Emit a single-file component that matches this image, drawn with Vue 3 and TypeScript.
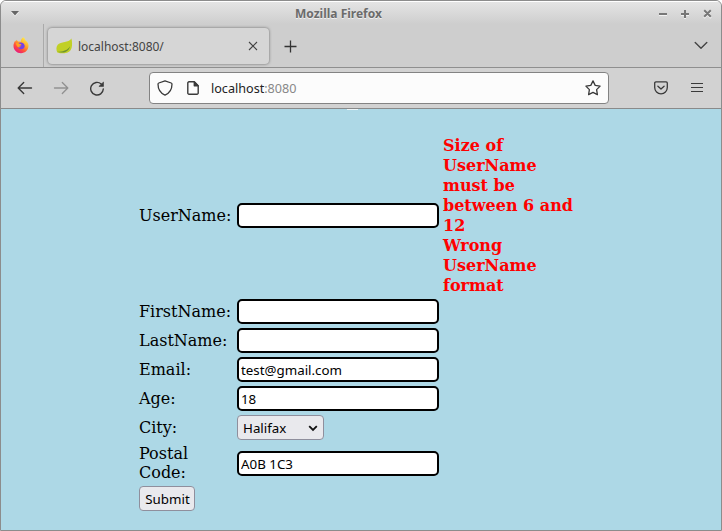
<script setup lang="ts">
import { ref } from 'vue'

interface Field {
  id: string
  label: string
  value: string
  kind: 'text' | 'select'
  errors?: string[]
}

const fields = ref<Field[]>([
  {
    id: 'userName',
    label: 'UserName:',
    value: '',
    kind: 'text',
    errors: ['Size of UserName must be between 6 and 12', 'Wrong UserName format'],
  },
  { id: 'firstName', label: 'FirstName:', value: '', kind: 'text' },
  { id: 'lastName', label: 'LastName:', value: '', kind: 'text' },
  { id: 'email', label: 'Email:', value: 'test@gmail.com', kind: 'text' },
  { id: 'age', label: 'Age:', value: '18', kind: 'text' },
  { id: 'city', label: 'City:', value: 'Halifax', kind: 'select' },
  { id: 'postalCode', label: 'Postal Code:', value: 'A0B 1C3', kind: 'text' },
])
</script>

<template>
  <div class="window">
    <header class="titlebar">
      <svg class="win-menu" width="10" height="7" viewBox="0 0 10 7">
        <path d="M1 2h8L5 6.5z" fill="#f5f5f5" />
        <path d="M1 1h8L5 5.5z" fill="#666" />
      </svg>
      <span class="win-title">Mozilla Firefox</span>
      <svg class="win-controls" width="54" height="11" viewBox="0 0 54 11" fill="none" stroke-width="2">
        <g stroke="#f2f2f2">
          <path d="M1 7h8M23 7h8M27 3v8M46 3l7 7M53 3l-7 7" />
        </g>
        <g stroke="#777">
          <path d="M1 6h8M23 6h8M27 2v8M46.2 2.2l6.6 6.6M52.8 2.2l-6.6 6.6" />
        </g>
      </svg>
    </header>

    <nav class="tabs">
      <div class="pinned">
        <svg width="16" height="17" viewBox="0 0 16 17">
          <defs>
            <linearGradient id="flame" x1="0.85" y1="0.05" x2="0.25" y2="1">
              <stop offset="0" stop-color="#fff44f" />
              <stop offset="0.4" stop-color="#ffa52a" />
              <stop offset="0.7" stop-color="#ff4a3d" />
              <stop offset="1" stop-color="#e31587" />
            </linearGradient>
          </defs>
          <path
            d="M10.2.3c1 .8 1.800 1.700 2.100 3 1.800 1.200 3.200 3.200 3.200 5.500 0 4.200-3.300 7.400-7.500 7.400S.5 13 .5 9c0-2 .6-3.900 1.900-5.600l.4 1.400.8-2L5 4.600c1-.2 1.800 0 2.500.3C7.700 3 8.700 1.300 10.200.3z"
            fill="url(#flame)"
          />
          <path d="M5.200 6.300c1-.8 2.500-1.200 4-.6 1.600.6 2.600 2 2.500 3.500-.2 1.800-1.700 3-3.500 3-1.700 0-3.100-1-3.400-2.500 1 .6 2 .4 2.800-.1l1-.8-1.700-.4z" fill="#7542e5" />
          <path d="M3 6.200c1.300-.5 2.600-.2 3.500.6l1.900.4c-.2 1-1 1.200-1.700 1.400-.5.5-.5 1.300.2 1.800-2 .3-3.700-1.400-3.900-4.200z" fill="#ffa31f" />
        </svg>
      </div>
      <div class="tab">
        <svg class="favicon" width="17" height="16" viewBox="0 0 17 16">
          <path d="M15.400.4c.8 3 1 6.800.2 9.600-1 3.300-3.600 4.900-7 5.200-2.500.2-5-.1-7.300-.8C.1 12 .1 8.700 1.700 6.800 4.800 3.200 12.600 5 15.400.4z" fill="#c1d026" />
          <path d="M1.300 13.800c5.500-.2 9.800-1.200 12.900-5.600-1.300 4.600-4.500 6.100-8.200 6.300-1.700.1-3.200-.2-4.700-.7z" fill="#6d9330" />
        </svg>
        <span class="tab-title">localhost:8080/</span>
        <svg class="tab-close" width="10" height="10" viewBox="0 0 10 10" fill="none" stroke="#444" stroke-width="1.1">
          <path d="M1 1l8 8M9 1L1 9" />
        </svg>
      </div>
      <svg class="new-tab" width="13" height="13" viewBox="0 0 13 13" fill="none" stroke="#333" stroke-width="1.3">
        <path d="M6.500.5v12M.5 6.500h12" />
      </svg>
      <svg class="all-tabs" width="14" height="9" viewBox="0 0 14 9" fill="none" stroke="#444" stroke-width="1.4">
        <path d="M1.200 1.500L7 7.200l5.800-5.700" stroke-linecap="round" stroke-linejoin="round" />
      </svg>
    </nav>

    <div class="toolbar">
      <svg class="back" width="16" height="14" viewBox="0 0 16 14" fill="none" stroke="#3a3a3a" stroke-width="1.4" stroke-linecap="round" stroke-linejoin="round">
        <path d="M14.500 7h-13M6.700 1.500L1.200 7l5.500 5.500" />
      </svg>
      <svg class="forward" width="16" height="14" viewBox="0 0 16 14" fill="none" stroke="#929292" stroke-width="1.3" stroke-linecap="round" stroke-linejoin="round">
        <path d="M1.500 7h13M9.300 1.500L14.800 7l-5.500 5.500" />
      </svg>
      <svg class="reload" width="16" height="16" viewBox="0 0 16 16">
        <path d="M12.200 4A6.300 6.300 0 1 0 14.300 9" fill="none" stroke="#3a3a3a" stroke-width="1.4" stroke-linecap="round" />
        <path d="M14.500 2v4.400h-4.600z" fill="#3a3a3a" stroke="#3a3a3a" stroke-width=".6" stroke-linejoin="round" />
      </svg>
      <div class="address">
        <svg class="shield" width="16" height="16" viewBox="0 0 16 16" fill="none" stroke="#3a3a3a" stroke-width="1.3" stroke-linejoin="round">
          <path d="M8 .8L14.200 3c.6.2.8.6.8 1.100C15 9.500 12 13.500 8 15.200 4 13.500 1 9.500 1 4.100c0-.5.2-.9.8-1.100z" />
        </svg>
        <svg class="page" width="12" height="14" viewBox="0 0 12 14" stroke="#3a3a3a" stroke-width="1.4" stroke-linejoin="round">
          <path d="M2 .8h5.300l3.900 3.900v7.300a1.200 1.200 0 0 1-1.200 1.200H2A1.200 1.200 0 0 1 .8 12V2A1.200 1.200 0 0 1 2 .8z" fill="none" />
          <path d="M7.300 1v3.700h3.700z" fill="#3a3a3a" />
        </svg>
        <span class="url">localhost<span class="port">:8080</span></span>
        <svg class="star" width="16" height="16" viewBox="0 0 16 16" fill="none" stroke="#3a3a3a" stroke-width="1.3" stroke-linejoin="round">
          <path d="M8 .9l2.200 4.500 4.900.7-3.500 3.500.8 5L8 12.300l-4.400 2.300.8-5L.9 6.100l4.900-.7z" />
        </svg>
      </div>
      <svg class="pocket" width="14" height="14" viewBox="0 0 14 14" fill="none" stroke="#3a3a3a" stroke-width="1.3" stroke-linecap="round" stroke-linejoin="round">
        <path d="M1.900.9h10.200c.7 0 1.200.4 1.200 1.100v4.500a6.300 6.300 0 0 1-12.600 0V2C.7 1.300 1.200.9 1.900.9z" />
        <path d="M3.900 5.200L7 8l3.100-2.800" />
      </svg>
      <svg class="burger" width="12" height="11" viewBox="0 0 12 11" stroke="#3a3a3a" stroke-width="1.2">
        <path d="M0 1.500h12M0 5.500h12M0 9.500h12" />
      </svg>
    </div>

    <main class="content">
      <span class="handle"></span>
      <form class="form" @submit.prevent>
        <template v-for="field in fields" :key="field.id">
          <label class="label" :for="field.id">{{ field.label }}</label>
          <input v-if="field.kind === 'text'" :id="field.id" v-model="field.value" class="input" type="text" />
          <div v-else class="select-box">
            <select :id="field.id" v-model="field.value" class="select">
              <option>Halifax</option>
            </select>
            <svg class="chevron" width="10" height="7" viewBox="0 0 10 7" fill="none" stroke="#111" stroke-width="1.8">
              <path d="M1.200 1.200L5 5l3.800-3.800" />
            </svg>
          </div>
          <div class="errors">
            <div v-for="error in field.errors" :key="error">{{ error }}</div>
          </div>
        </template>
        <button class="submit" type="submit">Submit</button>
      </form>
    </main>
  </div>
</template>

<style>
body {
  margin: 0;
  background: #fff;
}
</style>

<style scoped>
.window {
  box-sizing: border-box;
  width: 722px;
  height: 531px;
  display: flex;
  flex-direction: column;
  border: 1px solid #8c8c8c;
  border-radius: 6px 6px 0 0;
  overflow: hidden;
  background: #cecece;
  font-family: 'Noto Sans', sans-serif;
}

svg {
  display: block;
  flex: none;
}

.titlebar {
  box-sizing: border-box;
  height: 23px;
  flex: none;
  display: grid;
  grid-template-columns: 285px 1fr auto;
  align-items: center;
  padding: 0 9px;
  border-top: 1px solid #fff;
  background: linear-gradient(#e4e4e4, #cecece);
}

.win-title {
  padding-top: 2px;
  font-size: 12px;
  font-weight: 700;
  line-height: 20px;
  color: #6b6b6b;
  text-shadow: 0 1px 0 #f0f0f0;
}

.tabs {
  box-sizing: border-box;
  height: 44px;
  flex: none;
  display: flex;
  align-items: center;
  border-bottom: 1px solid #8f8f8f;
  padding-right: 13px;
}

.pinned {
  box-sizing: border-box;
  width: 43px;
  height: 43px;
  display: flex;
  align-items: center;
  padding-left: 12px;
  border-right: 1px solid #aaa;
}

.tab {
  box-sizing: border-box;
  width: 221px;
  height: 36px;
  margin-left: 4px;
  margin-top: 1px;
  padding: 0 11px 0 8px;
  display: flex;
  align-items: center;
  border-radius: 4px;
  background: #d6d6d6;
  box-shadow: 0 0 3px rgba(0, 0, 0, 0.5);
}

.tab-title {
  margin-left: 5px;
  padding-top: 2px;
  font-size: 12px;
  line-height: 18px;
  color: #444;
}

.tab-close {
  margin-left: auto;
}

.new-tab {
  margin-left: 15px;
  margin-top: 2px;
}

.all-tabs {
  margin-left: auto;
}

.toolbar {
  box-sizing: border-box;
  height: 41px;
  flex: none;
  display: flex;
  align-items: center;
  padding: 0 18px 0 16px;
  background: #d2d2d2;
  border-bottom: 1px solid #8a8a8a;
}

.forward {
  margin-left: 20px;
}

.reload {
  margin-left: 20px;
}

.address {
  box-sizing: border-box;
  width: 460px;
  height: 32px;
  margin-left: 44px;
  padding: 0 7px;
  display: flex;
  align-items: center;
  border: 1px solid #838383;
  border-radius: 4px;
  background: #fcfcfc;
}

.page {
  margin-left: 14px;
}

.url {
  margin-left: 12px;
  padding-top: 2px;
  font-size: 12.6px;
  line-height: 20px;
  color: #222;
}

.port {
  color: #888;
}

.star {
  margin-left: auto;
}

.pocket {
  margin-left: 45px;
}

.burger {
  margin-left: auto;
  margin-bottom: 1px;
}

.content {
  position: relative;
  flex: 1;
  padding: 26px 0 0 138px;
  background: #add8e6;
}

.handle {
  position: absolute;
  left: 346px;
  top: 0;
  width: 11px;
  height: 1px;
  background: #eef7fa;
}

.form {
  display: grid;
  grid-template-columns: 94px 202px 132px;
  column-gap: 4px;
  row-gap: 4px;
  align-items: center;
  font-family: 'DejaVu Serif', serif;
  font-size: 16px;
  line-height: 19px;
  color: #000;
}

.input {
  box-sizing: border-box;
  width: 202px;
  height: 25px;
  margin: 0;
  padding: 1px 2px 0;
  border: 2px solid #000;
  border-radius: 5px;
  background: #fff;
  color: #000;
  font: 13.333px 'Noto Sans', sans-serif;
  outline: none;
}

.errors {
  padding-top: 1px;
  margin-bottom: -1px;
  font-weight: 700;
  line-height: 20px;
  color: #f00;
}

.select-box {
  width: 87px;
  height: 25px;
  display: grid;
  align-items: center;
}

.select,
.chevron {
  grid-area: 1 / 1;
}

.chevron {
  justify-self: end;
  margin-right: 6px;
  margin-top: 1px;
  pointer-events: none;
}

.select,
.submit {
  box-sizing: border-box;
  height: 25px;
  margin: 0;
  border: 1px solid #8f8f9d;
  border-radius: 4px;
  background: #e9e9ed;
  color: #000;
  font: 13.333px 'Noto Sans', sans-serif;
  appearance: none;
}

.select {
  width: 87px;
  padding: 1px 5px 0;
}

.submit {
  width: 56px;
  padding: 1px 0 0 1px;
}
</style>
